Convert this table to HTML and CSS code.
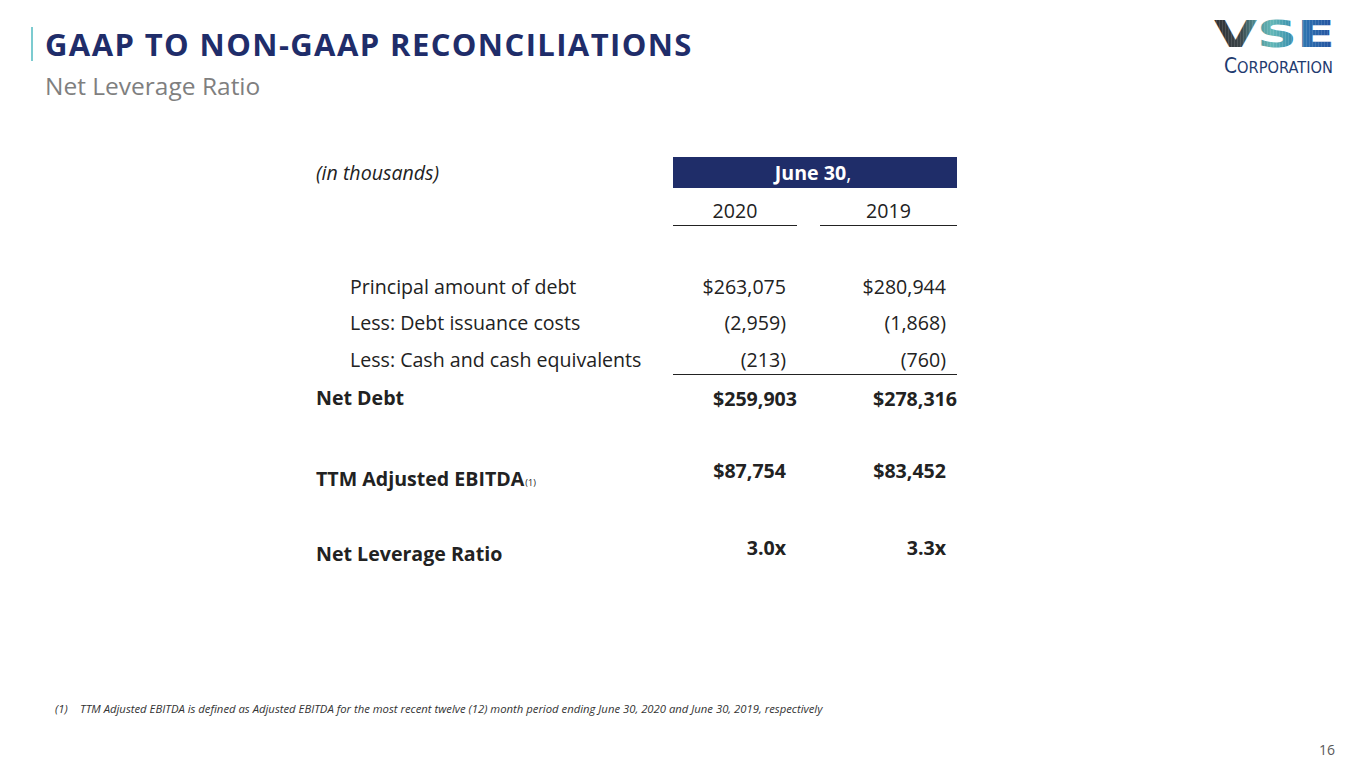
FILE: index.html
```html
<!DOCTYPE html>
<html lang="en">
<head>
<meta charset="utf-8">
<title>GAAP to Non-GAAP Reconciliations</title>
<link rel="stylesheet" href="styles.css">
</head>
<body>
<div class="slide">
  <header class="header">
    <div class="titles">
      <h1 class="title">GAAP TO NON-GAAP RECONCILIATIONS</h1>
      <h2 class="subtitle">Net Leverage Ratio</h2>
    </div>
    <svg class="logo" width="126" height="70" viewBox="-6 0 126 70" aria-label="VSE Corporation">
      <defs>
        <linearGradient id="vseGrad" x1="0" y1="0" x2="1" y2="0">
          <stop offset="0" stop-color="#2f3236"/>
          <stop offset="0.22" stop-color="#3b4448"/>
          <stop offset="0.34" stop-color="#4f8e92"/>
          <stop offset="0.48" stop-color="#63b7b7"/>
          <stop offset="0.62" stop-color="#3f94ae"/>
          <stop offset="0.78" stop-color="#2c6dae"/>
          <stop offset="1" stop-color="#24509e"/>
        </linearGradient>
        <pattern id="stripes" width="3" height="10" patternUnits="userSpaceOnUse">
          <rect width="1" height="10" fill="#ffffff" opacity="0.12"/>
        </pattern>
      </defs>
      <text x="-2" y="33" class="vse" textLength="121" lengthAdjust="spacingAndGlyphs" fill="url(#vseGrad)">VSE</text>
      <text x="-2" y="33" class="vse" textLength="121" lengthAdjust="spacingAndGlyphs" fill="url(#stripes)">VSE</text>
      <text x="8" y="59" class="corp" textLength="109" lengthAdjust="spacingAndGlyphs"><tspan class="corp-big">C</tspan>ORPORATION</text>
    </svg>
  </header>

  <section class="recon">
    <div class="row row-head">
      <div class="label italic">(in thousands)</div>
      <div class="band"><b>June 30</b>,</div>
    </div>
    <div class="row row-years">
      <div class="label"></div>
      <div class="c1 year">2020</div>
      <div class="c2"><span class="year year2">2019</span></div>
    </div>
    <div class="row row-item first">
      <div class="label indent">Principal amount of debt</div>
      <div class="c1 num">$263,075</div>
      <div class="c2 num">$280,944</div>
    </div>
    <div class="row row-item">
      <div class="label indent">Less: Debt issuance costs</div>
      <div class="c1 num">(2,959)</div>
      <div class="c2 num">(1,868)</div>
    </div>
    <div class="row row-item last">
      <div class="label indent">Less: Cash and cash equivalents</div>
      <div class="c1 num">(213)</div>
      <div class="c2 num">(760)</div>
    </div>
    <div class="row row-total">
      <div class="label bold">Net Debt</div>
      <div class="c1 num bold flush">$259,903</div>
      <div class="c2 num bold flush">$278,316</div>
    </div>
    <div class="row row-ebitda">
      <div class="label bold">TTM Adjusted EBITDA<span class="sup">(1)</span></div>
      <div class="c1 num bold raise-a">$87,754</div>
      <div class="c2 num bold raise-a">$83,452</div>
    </div>
    <div class="row row-ratio">
      <div class="label bold">Net Leverage Ratio</div>
      <div class="c1 num bold raise-b">3.0x</div>
      <div class="c2 num bold raise-b">3.3x</div>
    </div>
  </section>

  <footer class="footer">
    <p class="footnote"><span class="fn-mark">(1)</span>TTM Adjusted EBITDA is defined as Adjusted EBITDA for the most recent twelve (12) month period ending June 30, 2020 and June 30, 2019, respectively</p>
    <div class="page-num">16</div>
  </footer>
</div>
</body>
</html>
```

FILE: styles.css
```css
* { box-sizing: border-box; }

html, body {
  margin: 0;
  padding: 0;
  background: #ffffff;
}

body {
  font-family: "Open Sans", "Lato", "Liberation Sans", sans-serif;
  color: #222222;
}

.slide {
  width: 1365px;
  height: 768px;
  overflow: hidden;
  display: flex;
  flex-direction: column;
}

/* Header */
.header {
  display: flex;
  justify-content: space-between;
  align-items: flex-start;
  padding: 27px 29px 0 31px;
}

.titles {
  display: flex;
  flex-direction: column;
}

.title {
  margin: 0;
  padding-left: 12px;
  border-left: 2px solid #7ccbd0;
  font-family: "Open Sans", sans-serif;
  font-weight: 700;
  font-size: 31px;
  line-height: 34px;
  letter-spacing: 1.4px;
  color: #1f2d6a;
}

.subtitle {
  margin: 0;
  padding-top: 10px;
  padding-left: 14px;
  font-family: "Open Sans", sans-serif;
  font-weight: 400;
  font-size: 24.5px;
  line-height: 30px;
  color: #7f7f7f;
}

.logo {
  display: block;
  margin-top: -13px;
  overflow: visible;
}

.vse {
  font-family: "DejaVu Sans", sans-serif;
  font-weight: 700;
  font-size: 37px;
}

.corp {
  font-family: "DejaVu Sans", sans-serif;
  font-size: 16px;
  fill: #1f3b70;
}

.corp-big {
  font-size: 20.5px;
}

/* Table */
.recon {
  margin-top: 56px;
  margin-left: 316px;
  width: 641px;
  display: flex;
  flex-direction: column;
  font-size: 19.6px;
  line-height: 28px;
}

.row {
  display: grid;
  grid-template-columns: 357px 124px 160px;
  align-items: center;
}

.label {
  white-space: nowrap;
}

.italic { font-style: italic; }
.bold { font-weight: 700; }
.indent { padding-left: 34px; }

.row-head {
  height: 31px;
  grid-template-columns: 357px 284px;
}

.band {
  height: 31px;
  background: #1f2d69;
  color: #ffffff;
  display: flex;
  align-items: center;
  justify-content: center;
  padding-right: 4px;
}

.row-years {
  height: 38px;
  align-items: end;
}

.year {
  text-align: center;
  border-bottom: 1.5px solid #222;
  line-height: 28px;
}

.c2 .year2 {
  display: block;
  margin-left: 23px;
}

.row-item {
  height: 36px;
}

.row-item.first {
  margin-top: 43px;
}

.row-item.last {
  height: 33px;
  padding-top: 4px;
}

.num {
  text-align: right;
  padding-right: 11px;
}

.num.flush { padding-right: 0; }

.row-total {
  height: 50px;
  align-items: start;
}

.row-total .label,
.row-total .c1,
.row-total .c2 {
  padding-top: 10px;
}

.row-total .c1,
.row-total .c2 {
  border-top: 1.5px solid #222;
}

.row-ebitda {
  margin-top: 37px;
  height: 40px;
}

.row-ratio {
  margin-top: 33px;
  height: 40px;
}

.raise-a {
  position: relative;
  top: -10px;
}

.raise-b {
  position: relative;
  top: -6px;
}

.sup {
  font-size: 9px;
  font-weight: 400;
  margin-left: 1px;
}

/* Footer */
.footer {
  margin-top: auto;
  display: flex;
  flex-direction: column;
  padding: 0 30px 9px 55px;
}

.footnote {
  margin: 0 0 24px 0;
  font-size: 11.3px;
  line-height: 15px;
  font-style: italic;
  color: #333333;
  white-space: nowrap;
}

.fn-mark {
  display: inline-block;
  width: 25px;
}

.page-num {
  align-self: flex-end;
  font-size: 14px;
  line-height: 19px;
  color: #595959;
}
```
